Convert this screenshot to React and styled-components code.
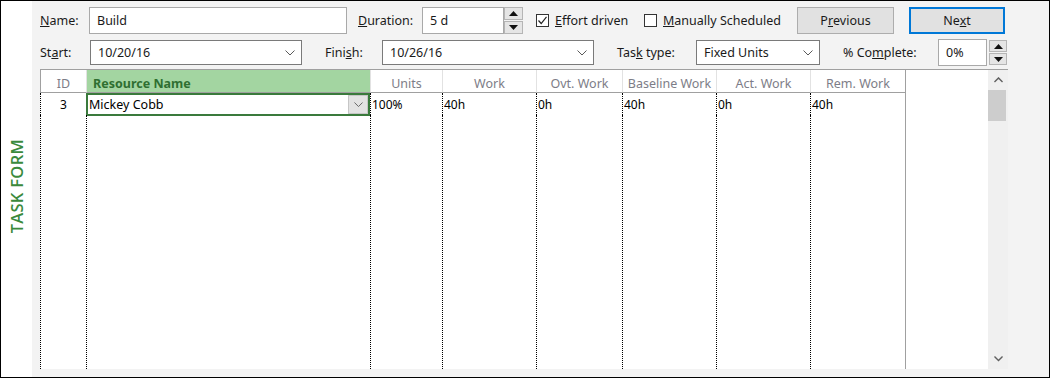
import React from 'react';
import styled, { createGlobalStyle } from 'styled-components';

const GlobalStyle = createGlobalStyle`
  html, body {
    margin: 0;
    padding: 0;
    background: #fff;
  }
  body {
    font-family: "Noto Sans", "Open Sans", sans-serif;
    font-size: 12px;
    color: #1a1a1a;
  }
`;

const columns = [
  { id: 'id', title: 'ID', width: 46, align: 'center', value: '3' },
  { id: 'name', title: 'Resource Name', width: 284, selected: true, value: 'Mickey Cobb' },
  { id: 'units', title: 'Units', width: 72, value: '100%' },
  { id: 'work', title: 'Work', width: 94, value: '40h' },
  { id: 'ovt', title: 'Ovt. Work', width: 86, value: '0h' },
  { id: 'base', title: 'Baseline Work', width: 94, value: '40h' },
  { id: 'act', title: 'Act. Work', width: 94, value: '0h' },
  { id: 'rem', title: 'Rem. Work', width: 95, value: '40h' },
];

const Chevron = ({ up, size = 10, color = '#5a5a5a', stroke = 1 }) => (
  <svg width={size} height={size / 2 + 1} viewBox="0 0 10 6">
    <polyline
      points={up ? '0.5,5.5 5,1 9.5,5.5' : '0.5,0.5 5,5 9.5,0.5'}
      fill="none"
      stroke={color}
      strokeWidth={stroke}
    />
  </svg>
);

const Triangle = ({ up }) => (
  <svg width="9" height="5" viewBox="0 0 9 5">
    <polygon points={up ? '0,5 4.5,0 9,5' : '0,0 4.5,5 9,0'} fill="#111" />
  </svg>
);

const Spinner = ({ width, height, ml = 0 }) => (
  <SpinBox $w={width} $h={height} $ml={ml}>
    <SpinButton><Triangle up /></SpinButton>
    <SpinButton><Triangle /></SpinButton>
  </SpinBox>
);

const Select = ({ width, value }) => (
  <SelectBox $w={width}>
    <span>{value}</span>
    <Chevron />
  </SelectBox>
);

export default function App() {
  return (
    <>
      <GlobalStyle />
      <Frame>
        <Side>
          <SideLabel>TASK FORM</SideLabel>
        </Side>
        <Panel>
          <FormRow>
            <Label $w={49}><u>N</u>ame:</Label>
            <TextInput $w={258} $h={27}>Build</TextInput>
            <Label $w={64} $ml={11}><u>D</u>uration:</Label>
            <TextInput $w={82} $h={27}>5 d</TextInput>
            <Spinner width={19} height={27} />
            <CheckItem $w={108} $ml={13}>
              <CheckBox>
                <svg width="11" height="11" viewBox="0 0 11 11">
                  <polyline points="1.5,5.5 4.2,8.5 9.5,1.8" fill="none" stroke="#222" strokeWidth="1.2" />
                </svg>
              </CheckBox>
              <span><u>E</u>ffort driven</span>
            </CheckItem>
            <CheckItem $w={153}>
              <CheckBox />
              <span><u>M</u>anually Scheduled</span>
            </CheckItem>
            <Button $w={97}>P<u>r</u>evious</Button>
            <Button $w={96} $ml={15} $primary>Ne<u>x</u>t</Button>
          </FormRow>
          <FormRow $mt={5}>
            <Label $w={50}>St<u>a</u>rt:</Label>
            <Select width={212} value="10/20/16" />
            <Label $w={57} $ml={23}>Fini<u>s</u>h:</Label>
            <Select width={212} value="10/26/16" />
            <Label $w={79} $ml={23}>Tas<u>k</u> type:</Label>
            <Select width={124} value="Fixed Units" />
            <Label $w={95} $ml={23}>% Co<u>m</u>plete:</Label>
            <TextInput $w={49} $h={27}>0%</TextInput>
            <Spinner width={18} height={25} ml={2} />
          </FormRow>
          <TableBox>
            <Grid>
              {columns.map((col, i) => (
                <Column key={col.id} $w={col.width}>
                  <HeadCell $align={col.align} $selected={col.selected} $first={i === 0}>
                    {col.title}
                  </HeadCell>
                  {col.selected ? (
                    <SelectedCell>
                      <span>{col.value}</span>
                      <CellDrop><Chevron size={9} /></CellDrop>
                    </SelectedCell>
                  ) : (
                    <DataCell $align={col.align}>{col.value}</DataCell>
                  )}
                  <ColumnBody />
                </Column>
              ))}
              <Filler />
            </Grid>
            <ScrollBar>
              <ScrollArrow><Chevron up size={9} color="#606060" stroke={1.6} /></ScrollArrow>
              <Thumb />
              <ScrollSpace />
              <ScrollArrow><Chevron size={9} color="#606060" stroke={1.6} /></ScrollArrow>
            </ScrollBar>
          </TableBox>
        </Panel>
      </Frame>
    </>
  );
}

const Frame = styled.div`
  width: 1050px;
  height: 378px;
  box-sizing: border-box;
  border: 1px solid #000;
  display: flex;
  background: #fff;
`;

const Side = styled.div`
  width: 31px;
  display: flex;
  align-items: center;
  justify-content: center;
  background: #fff;
`;

const SideLabel = styled.div`
  writing-mode: vertical-rl;
  transform: rotate(180deg);
  color: #3a8a3c;
  font-family: "Open Sans", "Noto Sans", sans-serif;
  font-weight: 600;
  font-size: 16.5px;
  letter-spacing: 0.3px;
  margin-top: -6px;
`;

const Panel = styled.div`
  flex: 1;
  display: flex;
  flex-direction: column;
  background: #f3f3f3;
  padding: 6px 41px 8px 8px;
  min-width: 0;
`;

const FormRow = styled.div`
  display: flex;
  align-items: center;
  height: 27px;
  margin-top: ${(p) => p.$mt || 0}px;
  white-space: nowrap;
`;

const Label = styled.div`
  width: ${(p) => p.$w}px;
  margin-left: ${(p) => p.$ml || 0}px;
  flex-shrink: 0;
  font-size: 12.5px;
  color: #1a1a1a;
`;

const TextInput = styled.div`
  width: ${(p) => p.$w}px;
  height: ${(p) => p.$h}px;
  box-sizing: border-box;
  flex-shrink: 0;
  background: #fff;
  border: 1px solid #a9a9a9;
  padding-left: 7px;
  display: flex;
  align-items: center;
  font-size: 12.5px;
`;

const SelectBox = styled.div`
  width: ${(p) => p.$w}px;
  height: 25px;
  box-sizing: border-box;
  flex-shrink: 0;
  background: #fff;
  border: 1px solid #7a7a7a;
  padding: 0 6px 0 7px;
  display: flex;
  align-items: center;
  justify-content: space-between;
  font-size: 12.5px;
`;

const SpinBox = styled.div`
  width: ${(p) => p.$w}px;
  height: ${(p) => p.$h}px;
  margin-left: ${(p) => p.$ml}px;
  flex-shrink: 0;
  display: flex;
  flex-direction: column;
  gap: 1px;
`;

const SpinButton = styled.div`
  flex: 1;
  box-sizing: border-box;
  background: #e5e5e5;
  border: 1px solid #b5b5b5;
  display: flex;
  align-items: center;
  justify-content: center;
`;

const CheckItem = styled.label`
  width: ${(p) => p.$w}px;
  margin-left: ${(p) => p.$ml || 0}px;
  flex-shrink: 0;
  display: flex;
  align-items: center;
  gap: 6px;
  font-size: 12.5px;
`;

const CheckBox = styled.span`
  width: 13px;
  height: 13px;
  box-sizing: border-box;
  border: 1px solid #333;
  background: #fff;
  display: flex;
  align-items: center;
  justify-content: center;
`;

const Button = styled.div`
  width: ${(p) => p.$w}px;
  height: 27px;
  margin-left: ${(p) => p.$ml || 0}px;
  flex-shrink: 0;
  box-sizing: border-box;
  background: #e1e1e1;
  border: ${(p) => (p.$primary ? '2px solid #0078d7' : '1px solid #adadad')};
  display: flex;
  align-items: center;
  justify-content: center;
  font-size: 12.5px;
`;

const TableBox = styled.div`
  flex: 1;
  margin-top: 3px;
  display: flex;
  border-top: 1px solid #a0a0a0;
  min-height: 0;
`;

const Grid = styled.div`
  flex: 1;
  display: flex;
  background: #fff;
`;

const Column = styled.div`
  width: ${(p) => p.$w}px;
  flex-shrink: 0;
  display: flex;
  flex-direction: column;
`;

const HeadCell = styled.div`
  height: 23px;
  box-sizing: border-box;
  border-bottom: 1px solid #a0a0a0;
  border-left: 1px solid ${(p) => (p.$first ? '#a0a0a0' : '#e2e2e2')};
  background: ${(p) => (p.$selected ? '#a3d5a1' : '#fff')};
  color: ${(p) => (p.$selected ? '#2f6f31' : '#7d7d87')};
  font-weight: ${(p) => (p.$selected ? 700 : 400)};
  font-size: 12.5px;
  display: flex;
  align-items: center;
  justify-content: ${(p) => (p.$selected ? 'flex-start' : 'center')};
  padding-left: ${(p) => (p.$selected ? 6 : 0)}px;
  padding-top: 5px;
`;

const DataCell = styled.div`
  height: 22px;
  box-sizing: border-box;
  border-left: 1px dotted #000;
  display: flex;
  align-items: center;
  justify-content: ${(p) => (p.$align === 'center' ? 'center' : 'flex-start')};
  padding-left: ${(p) => (p.$align === 'center' ? 0 : 1)}px;
  font-size: 12px;
  color: #000;
`;

const SelectedCell = styled.div`
  height: 23px;
  margin-bottom: -1px;
  box-sizing: border-box;
  border: 2px solid #3a7a3c;
  display: flex;
  align-items: center;
  justify-content: space-between;
  padding: 0 0 0 1px;
  font-size: 12.5px;
  color: #000;
`;

const CellDrop = styled.span`
  width: 20px;
  height: 19px;
  box-sizing: border-box;
  background: #e3e3e3;
  border: 1px solid #c6c6c6;
  display: flex;
  align-items: center;
  justify-content: center;
`;

const ColumnBody = styled.div`
  flex: 1;
  border-left: 1px dotted #000;
`;

const Filler = styled.div`
  flex: 1;
  border-left: 1px solid #a0a0a0;
`;

const ScrollBar = styled.div`
  width: 20px;
  background: #f0f0f0;
  display: flex;
  flex-direction: column;
  align-items: center;
`;

const ScrollArrow = styled.div`
  height: 20px;
  display: flex;
  align-items: center;
  justify-content: center;
`;

const Thumb = styled.div`
  width: 18px;
  height: 31px;
  margin-right: 2px;
  background: #cdcdcd;
`;

const ScrollSpace = styled.div`
  flex: 1;
`;
